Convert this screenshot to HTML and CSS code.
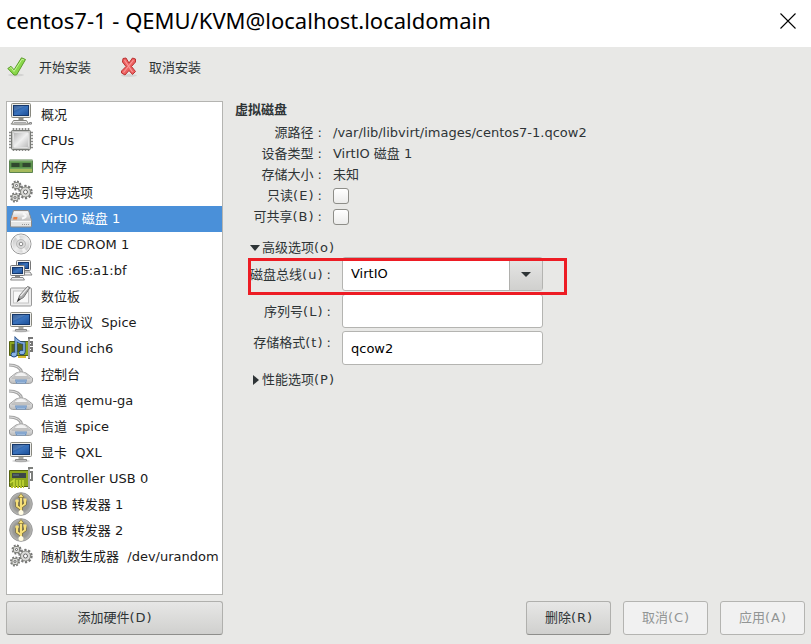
FILE: index.html
```html
<!DOCTYPE html>
<html lang="zh-CN">
<head>
  <meta charset="UTF-8">
  <title>centos7-1 - QEMU/KVM@localhost.localdomain</title>
  <meta name="viewport" content="width=device-width, initial-scale=1.0">
  <link rel="stylesheet" href="styles.css">
</head>
<body>
  <svg class="sprite" aria-hidden="true">
    <defs>
      <linearGradient id="blue" x1="0" y1="0" x2="1" y2="1">
        <stop offset="0" stop-color="#174382"/>
        <stop offset=".5" stop-color="#3a73bd"/>
        <stop offset="1" stop-color="#1c4f98"/>
      </linearGradient>
      <linearGradient id="metal" x1="0" y1="0" x2="1" y2="1">
        <stop offset="0" stop-color="#b4b4b4"/>
        <stop offset=".5" stop-color="#efefef"/>
        <stop offset="1" stop-color="#b9b9b9"/>
      </linearGradient>
      <linearGradient id="light" x1="0" y1="0" x2="0" y2="1">
        <stop offset="0" stop-color="#fafafa"/>
        <stop offset="1" stop-color="#bdbdbd"/>
      </linearGradient>
      <radialGradient id="ball">
        <stop offset="0" stop-color="#8f8f8a"/>
        <stop offset=".7" stop-color="#999996"/>
        <stop offset="1" stop-color="#bdbdba"/>
      </radialGradient>
    </defs>

    <symbol id="computer" viewBox="0 0 24 24">
      <ellipse cx="12" cy="22" rx="11" ry="1.5" fill="#ccc"/>
      <rect x="2.5" y="1.5" width="19" height="14" rx="1" fill="#e9e9e4" stroke="#88887f"/>
      <rect x="4.5" y="3.5" width="15" height="10" fill="url(#blue)" stroke="#15386c"/>
      <path d="M5 4h11L5 9z" fill="#fff" opacity=".15"/>
      <path d="M9.5 16h5v2h-5z" fill="#8b8b85"/>
      <path d="M4.5 18.500h13l2 3.500h-17z" fill="#eee" stroke="#83837d"/>
      <path d="M5 20.500h12" stroke="#aaa"/>
      <path d="M20.500 20.500h2v1.500h-2z" fill="#eee" stroke="#888"/>
    </symbol>

    <symbol id="display" viewBox="0 0 24 24">
      <ellipse cx="12" cy="21" rx="9" ry="1.5" fill="#d5d5d5"/>
      <rect x="1.5" y="2.5" width="21" height="14" rx="1" fill="#ededeb" stroke="#88887f"/>
      <rect x="3.5" y="4.5" width="17" height="10" fill="url(#blue)" stroke="#15386c"/>
      <path d="M4 5h13L4 11z" fill="#fff" opacity=".15"/>
      <path d="M9.5 17h5v2.500h-5z" fill="#a5a5a0"/>
      <path d="M6.5 19.500h11v1.500h-11z" fill="#eee" stroke="#888"/>
    </symbol>

    <symbol id="cpu" viewBox="0 0 24 24">
      <path d="M4.5 0v23M7.5 0v23M10.5 0v23M13.5 0v23M16.5 0v23M19.5 0v23M0 4.500h24M0 7.500h24M0 10.500h24M0 13.500h24M0 16.500h24M0 19.500h24" stroke="#8a8a88" stroke-width="1.600"/>
      <rect x="2.5" y="2.5" width="19" height="19" rx="1" fill="#c4c4c2" stroke="#777975"/>
      <rect x="4.5" y="4.5" width="15" height="15" rx="1" fill="url(#metal)" stroke="#e0e0e0"/>
    </symbol>

    <symbol id="memory" viewBox="0 0 24 24">
      <path d="M.5 6h23v12.500H.5z" fill="#6fa45d" stroke="#5c8450"/>
      <path d="M0 6.500h24" stroke="#8fae84"/>
      <path d="M1.500 8.500h21v5h-21z" fill="#4d8240"/>
      <path d="M2.500 9h8v4h-8zM13.500 9h8v4h-8z" fill="#31482f"/>
      <path d="M1.500 16.500h21" stroke="#dcd05c" stroke-width="3" stroke-dasharray="1 1"/>
    </symbol>

    <symbol id="gears" viewBox="0 0 24 24">
      <g fill="none" stroke="#777">
        <circle cx="7.500" cy="5.500" r="4" stroke-width="2" stroke-dasharray="1.800 1.340"/>
        <circle cx="6" cy="17.500" r="4" stroke-width="2" stroke-dasharray="1.800 1.340"/>
        <circle cx="16.500" cy="12" r="6" stroke-width="2.400" stroke-dasharray="2.200 1.570"/>
      </g>
      <g fill="#d9d9d7" stroke="#84867f">
        <rect x="4.5" y="2.5" width="6" height="6" rx="1.500"/>
        <rect x="3" y="14.500" width="6" height="6" rx="1.500"/>
        <circle cx="16.500" cy="12" r="5"/>
      </g>
      <g fill="#fff" stroke="#666">
        <circle cx="7.500" cy="5.500" r="1"/>
        <circle cx="6" cy="17.500" r="1"/>
        <circle cx="16.500" cy="12" r="2"/>
      </g>
    </symbol>

    <symbol id="disk" viewBox="0 0 24 24">
      <path d="M4.5 4.500h15l3 10v5.500q0 1-1 1h-19q-1 0-1-1v-5.500z" fill="#ddd" stroke="#888"/>
      <path d="M5 5.500h14l3 9H2z" fill="url(#light)"/>
      <path d="M2 15h20v5H2z" fill="#e4e4e3"/>
      <path d="M2 15.500h20" stroke="#f8f8f8"/>
      <path d="M14 7.500q6 3-1 5" fill="none" stroke="#f8f8f8" stroke-width="2"/>
      <path d="M4.500 11h4l-.5 2.500H4z" fill="#e98142"/>
      <path d="M13 18.500h8" stroke="#999" stroke-dasharray="1 1"/>
    </symbol>

    <symbol id="cdrom" viewBox="0 0 24 24">
      <circle cx="12" cy="12" r="10" fill="url(#metal)" stroke="#999"/>
      <path d="M12 12L6 4.500l4-2zM12 12l6 7.500-4 2z" fill="#fff" opacity=".7"/>
      <circle cx="12" cy="12" r="9" fill="none" stroke="#eee"/>
      <circle cx="12" cy="12" r="4.500" fill="#d8d8d8" stroke="#bbb"/>
      <circle cx="12" cy="12" r="1.800" fill="#fff" stroke="#888"/>
    </symbol>

    <symbol id="network" viewBox="0 0 24 24">
      <rect x="7.5" y="2.5" width="14" height="10" rx="1" fill="#eee" stroke="#777"/>
      <rect x="9.5" y="4.5" width="10" height="6" fill="url(#blue)" stroke="#15386c"/>
      <path d="M14 14h7l2 3h-8z" fill="#eee" stroke="#888"/>
      <rect x="1.5" y="7.5" width="14" height="10" rx="1" fill="#eee" stroke="#777"/>
      <rect x="3.5" y="9.5" width="10" height="6" fill="url(#blue)" stroke="#15386c"/>
      <path d="M6 18h5v1.500H6z" fill="#888"/>
      <path d="M3 19.500h11l1.500 2.500H1.500z" fill="#eee" stroke="#888"/>
    </symbol>

    <symbol id="tablet" viewBox="0 0 24 24">
      <rect x="1.5" y="4" width="21" height="18" rx="1" fill="#ececec" stroke="#999"/>
      <rect x="4.5" y="7" width="15" height="12" fill="#f8f8f8" stroke="#c4c4c4"/>
      <path d="M9 16.500l1.500-5L18.500 2.500l2.500 1-6.500 10z" fill="#aaa" stroke="#777"/>
      <path d="M11.500 12l7.500-8.500" stroke="#eee" stroke-width="1.200"/>
      <path d="M7.500 18.500l2-4.500 2 1.500z" fill="#333"/>
    </symbol>

    <symbol id="sound" viewBox="0 0 24 24">
      <path d="M.5 5.500h19v14H.5z" fill="#8da61d" stroke="#55620f"/>
      <path d="M2.500 8h14v8h-14z" fill="#56631b"/>
      <path d="M9 20h8v2H9z" fill="#dabd36"/>
      <path d="M24 2h-4v21M20 6h3v3h-3M20 12h3v3h-3" fill="none" stroke="#777" stroke-width="2"/>
      <path d="M20 3v19" stroke="#d5d5d5"/>
      <path d="M7 18V3.500q4 4 8 3.500v9" fill="none" stroke="#204a87" stroke-width="3"/>
      <ellipse cx="5" cy="18.500" rx="3" ry="2.500" fill="#8ab3e3" stroke="#204a87"/>
      <ellipse cx="13" cy="16.500" rx="3" ry="2.300" fill="#8ab3e3" stroke="#204a87"/>
      <path d="M7 18V3.500q4 4 8 3.500v9" fill="none" stroke="#8ab3e3" stroke-width="1.500"/>
    </symbol>

    <symbol id="serial" viewBox="0 0 24 24">
      <path d="M0 3q11 0 13 8" fill="none" stroke="#a5a5a5" stroke-width="3"/>
      <path d="M0 3q11 0 13 8" fill="none" stroke="#ddd"/>
      <path d="M7 11q5-3 10 0l6.500 5v3q0 2-3 2.500h-17Q.5 21 .5 19v-3z" fill="url(#light)" stroke="#a0a0a0"/>
      <path d="M8.500 11q3.500-2 7 0l4 3.500h-15z" fill="#f2f2f2" stroke="#c2c2c2"/>
      <path d="M2.500 16h19" stroke="#aaa"/>
      <path d="M6 17.500h12l-1 4H7z" fill="#6d94c4"/>
      <path d="M7.500 19h9M8.500 20.500h7" stroke="#d0e0f2" stroke-dasharray="1 1"/>
    </symbol>

    <symbol id="card" viewBox="0 0 24 24">
      <path d="M.5 4.500h19v16H.5z" fill="#8da61d" stroke="#55620f"/>
      <path d="M1 17l4-3v7M8 20v-6M11 20v-6M14 20v-6" fill="none" stroke="#c6da3a" stroke-width="1.500"/>
      <rect x="3" y="7" width="14" height="5" fill="#3c4647"/>
      <path d="M4 9h6" stroke="#667f8a"/>
      <path d="M2 21h13" stroke="#b3bf25" stroke-width="2" stroke-dasharray="2 1"/>
      <path d="M24 2h-4v21M20 6h3v8h-3" fill="none" stroke="#7d7f7c" stroke-width="2"/>
      <path d="M20 3v19" stroke="#d5d5d5"/>
    </symbol>

    <symbol id="usb" viewBox="0 0 24 24">
      <circle cx="12" cy="12" r="11.300" fill="url(#ball)" stroke="#999"/>
      <path d="M12 21V4M12 17l-4-3V9M12 15l4-3V8" fill="none" stroke="#76672c" stroke-width="3.200"/>
      <path d="M12 20V4M12 17l-4-3V9M12 15l4-3V8" fill="none" stroke="#f6df78" stroke-width="2"/>
      <path d="M12 1.500l3 4H9z" fill="#f6df78" stroke="#76672c" stroke-width=".6"/>
      <circle cx="8" cy="9" r="1.800" fill="#f6df78"/>
      <path d="M14.500 6.500h3v3h-3z" fill="#f6df78"/>
      <circle cx="12" cy="20.500" r="2.500" fill="#fffbe2"/>
    </symbol>
  </svg>

  <header class="titlebar">
    <h1>centos7-1 - QEMU/KVM@localhost.localdomain</h1>
    <button class="close" type="button" aria-label="关闭">
      <svg width="16" height="16" viewBox="0 0 16 16"><path d="M.5.5l15 15M15.500.5l-15 15" stroke="#000" stroke-width="1.100"/></svg>
    </button>
  </header>

  <nav class="toolbar">
    <button type="button">
      <svg width="20" height="20" viewBox="0 0 20 20">
        <ellipse cx="9" cy="18" rx="8" ry="1.500" fill="#d3d3d2"/>
        <path d="M.8 11.500l3.200-2.200 3 3.500L14.500.8l4 1.700L9.500 18H7z" fill="#8ad84a" stroke="#5c9c2c" stroke-linejoin="round"/>
        <path d="M2.500 11.500l1.500-1 3 4L15 2.200l2 .8" fill="none" stroke="#c3f396"/>
      </svg>
      开始安装
    </button>
    <button type="button">
      <svg width="20" height="20" viewBox="0 0 20 20">
        <ellipse cx="10" cy="18.500" rx="8" ry="1.500" fill="#d3d3d2"/>
        <path d="M4 1.500l3-.5 3 5 3.500-5 3 1v3l-4 4.500 4 5-3 3-3.500-4L6 18l-3.500-2v-2L7 9.500 3.500 5z" fill="#ee6060" stroke="#b83232" stroke-linejoin="round"/>
        <path d="M5.500 3l8 12M14.500 3L4.500 15.500" stroke="#f79a9a" stroke-width="1.200"/>
      </svg>
      取消安装
    </button>
  </nav>

  <main>
    <aside>
      <ul class="hardware">
        <li><a href="#"><svg><use href="#computer"/></svg>概况</a></li>
        <li><a href="#"><svg><use href="#cpu"/></svg>CPUs</a></li>
        <li><a href="#"><svg><use href="#memory"/></svg>内存</a></li>
        <li><a href="#"><svg><use href="#gears"/></svg>引导选项</a></li>
        <li><a href="#" class="selected"><svg><use href="#disk"/></svg>VirtIO 磁盘 1</a></li>
        <li><a href="#"><svg><use href="#cdrom"/></svg>IDE CDROM 1</a></li>
        <li><a href="#"><svg><use href="#network"/></svg>NIC :65:a1:bf</a></li>
        <li><a href="#"><svg><use href="#tablet"/></svg>数位板</a></li>
        <li><a href="#"><svg><use href="#display"/></svg>显示协议&nbsp; Spice</a></li>
        <li><a href="#"><svg><use href="#sound"/></svg>Sound ich6</a></li>
        <li><a href="#"><svg><use href="#serial"/></svg>控制台</a></li>
        <li><a href="#"><svg><use href="#serial"/></svg>信道&nbsp; qemu-ga</a></li>
        <li><a href="#"><svg><use href="#serial"/></svg>信道&nbsp; spice</a></li>
        <li><a href="#"><svg><use href="#display"/></svg>显卡&nbsp; QXL</a></li>
        <li><a href="#"><svg><use href="#card"/></svg>Controller USB 0</a></li>
        <li><a href="#"><svg><use href="#usb"/></svg>USB 转发器 1</a></li>
        <li><a href="#"><svg><use href="#usb"/></svg>USB 转发器 2</a></li>
        <li><a href="#"><svg><use href="#gears"/></svg>随机数生成器&nbsp; /dev/urandom</a></li>
      </ul>
      <button class="btn" type="button">添加硬件(<span class="key">D</span>)</button>
    </aside>

    <section class="panel">
      <h2>虚拟磁盘</h2>
      <div class="info">
        <span class="name">源路径 :</span><span>/var/lib/libvirt/images/centos7-1.qcow2</span>
        <span class="name">设备类型 :</span><span>VirtIO 磁盘 1</span>
        <span class="name">存储大小 :</span><span>未知</span>
        <label class="name" for="readonly">只读(<span class="key">E</span>) :</label><input type="checkbox" id="readonly">
        <label class="name" for="share">可共享(<span class="key">B</span>) :</label><input type="checkbox" id="share">
      </div>

      <details open>
        <summary><span>高级选项(<span class="key">o</span>)</span></summary>
        <div class="fields">
          <div class="field marked">
            <label for="bus">磁盘总线(<span class="key">u</span>) :</label>
            <div class="combo">
              <select id="bus"><option>VirtIO</option></select>
            </div>
          </div>
          <div class="field">
            <label for="serial-no">序列号(<span class="key">L</span>) :</label>
            <input type="text" id="serial-no">
          </div>
          <div class="field top">
            <label for="format">存储格式(<span class="key">t</span>) :</label>
            <input type="text" id="format" value="qcow2">
          </div>
        </div>
      </details>
      <details>
        <summary><span>性能选项(<span class="key">P</span>)</span></summary>
      </details>

      <div class="actions">
        <button class="btn" type="button">删除(<span class="key">R</span>)</button>
        <button class="btn" type="button" disabled>取消(<span class="key">C</span>)</button>
        <button class="btn" type="button" disabled>应用(<span class="key">A</span>)</button>
      </div>
    </section>
  </main>
</body>
</html>
```

FILE: styles.css
```css
*, *::before, *::after { box-sizing: border-box; }
body {
  margin: 0;
  min-height: 100vh;
  display: flex;
  flex-direction: column;
  background: #e8e8e6;
  color: #2e3436;
  font-family: "DejaVu Sans", "Noto Sans CJK SC", sans-serif;
  font-size: 13px;
  line-height: 21px;
}
button, input, select {
  font: inherit;
  color: inherit;
}
h1, h2, ul { margin: 0; padding: 0; }
.sprite {
  position: absolute;
  width: 0;
  height: 0;
}
.key { padding: 0 1px; }

.titlebar {
  display: flex;
  justify-content: space-between;
  align-items: center;
  height: 47px;
  padding: 0 15px 5px 6px;
  background: #fff;
  color: #000;
}
.titlebar h1 {
  font-family: "Noto Sans", sans-serif;
  font-size: 22px;
  font-weight: normal;
  line-height: 30px;
  padding-bottom: 2px;
}
.close {
  display: flex;
  padding: 0;
  border: none;
  background: none;
}

.toolbar {
  display: flex;
  gap: 28px;
  height: 54px;
  padding: 0 7px 14px;
}
.toolbar button {
  display: flex;
  align-items: center;
  gap: 12px;
  padding: 0;
  border: none;
  background: none;
}
.toolbar button + button { gap: 10px; }

main {
  flex: 1;
  display: grid;
  grid-template-columns: 217px 1fr;
  gap: 12px;
  padding: 0 6px 9px;
}
aside {
  display: flex;
  flex-direction: column;
  gap: 6px;
}
.hardware {
  flex: 1;
  list-style: none;
  background: #fff;
  border: 1px solid #b4b4b1;
}
.hardware a {
  display: flex;
  align-items: center;
  gap: 8px;
  height: 26px;
  padding: 0 0 2px 2px;
  color: #1a1a1a;
  text-decoration: none;
  white-space: nowrap;
}
.hardware svg {
  flex: none;
  width: 24px;
  height: 24px;
}
.hardware .selected {
  background: #4a90d9;
  color: #fff;
}

.btn {
  height: 34px;
  padding: 0 0 2px;
  border: 1px solid #b0b0ad;
  border-bottom-color: #8e8e8b;
  border-radius: 3px;
  background: linear-gradient(#e7e7e6, #d0d0ce);
}
.btn:disabled {
  border-color: #b4b4b1;
  background: #f1f1f1;
  color: #929595;
}

.panel {
  display: flex;
  flex-direction: column;
}
.panel h2 {
  font-size: 13px;
  line-height: 18px;
  margin-bottom: 3px;
}
.info {
  display: grid;
  grid-template-columns: 87px 1fr;
  column-gap: 11px;
  grid-auto-rows: 21px;
  align-items: center;
  margin-bottom: 12px;
}
.name { text-align: right; }
input[type="checkbox"] {
  appearance: none;
  width: 16px;
  height: 16px;
  margin: 0;
  border: 1px solid #8d8d88;
  border-radius: 3px;
  background: linear-gradient(#fff, #ececeb);
}

details { padding-left: 15px; }
summary {
  display: flex;
  align-items: center;
  gap: 2px;
  line-height: 18px;
  list-style: none;
}
summary::before {
  content: "";
  width: 10px;
  height: 10px;
  background: #2e3436;
  clip-path: polygon(30% 0, 90% 50%, 30% 100%);
}
details[open] > summary::before {
  clip-path: polygon(0 20%, 100% 20%, 50% 80%);
}
.fields {
  display: flex;
  flex-direction: column;
  gap: 3px;
  margin-left: -15px;
  padding-bottom: 6px;
}
.field {
  position: relative;
  display: grid;
  grid-template-columns: 96px 201px;
  gap: 11px;
  align-items: center;
}
.field label {
  text-align: right;
  white-space: nowrap;
}
.field.top label {
  align-self: start;
  line-height: 24px;
}
.field input, .field select {
  display: block;
  width: 100%;
  height: 34px;
  padding: 0 8px;
  border: 1px solid #b4b4b1;
  border-radius: 3px;
  background: #fff;
  color: #000;
}
.field select {
  appearance: none;
  padding-bottom: 2px;
}
.combo { position: relative; }
.combo::before {
  content: "";
  position: absolute;
  top: 1px;
  right: 1px;
  width: 33px;
  height: 32px;
  border-left: 1px solid #b0b0ad;
  background: linear-gradient(#e7e7e6, #d0d0ce);
  pointer-events: none;
}
.combo::after {
  content: "";
  position: absolute;
  top: 15px;
  right: 12px;
  border: 5px solid transparent;
  border-top-color: #2e3436;
  border-bottom: none;
  pointer-events: none;
}
/* red outline round the disk bus row */
.marked::after {
  content: "";
  position: absolute;
  top: 1px;
  left: 13px;
  width: 319px;
  height: 37px;
  border: 3px solid #ed1c24;
  z-index: 1;
  pointer-events: none;
}

.actions {
  display: flex;
  justify-content: flex-end;
  gap: 12px;
  margin-top: auto;
}
.actions .btn { width: 85px; }
```
